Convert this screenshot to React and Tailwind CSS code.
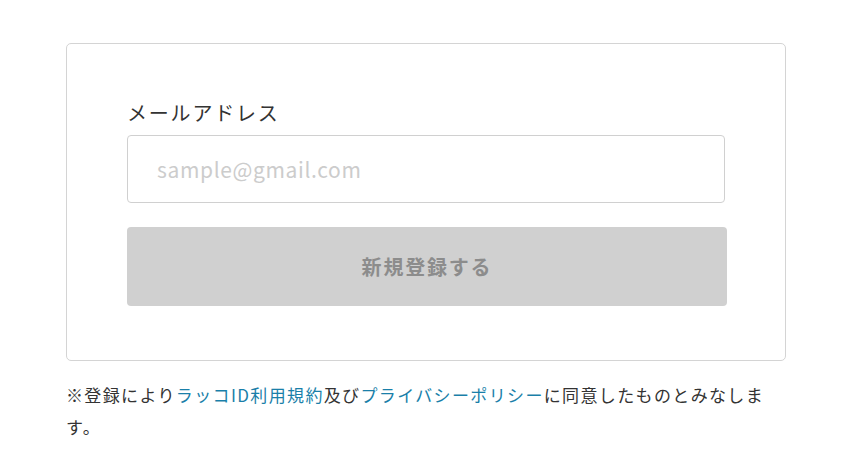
import React from 'react';

const font = { fontFamily: '"Noto Sans CJK JP", "Noto Sans", sans-serif' };

export default function App() {
  return (
    <div className="w-[856px] h-[456px] bg-white text-[#333]" style={font}>
      <div className="ml-[66px] pt-[43px] w-[720px]">
        {/* Card */}
        <div className="border border-[#d4d4d4] rounded-[5px] px-[60px] pt-[54px] pb-[54px]">
          <label className="block text-[20px] leading-[30px] tracking-[0.09em] mb-[7px]">
            メールアドレス
          </label>
          <input
            type="email"
            placeholder="sample@gmail.com"
            className="block w-[598px] h-[68px] border border-[#d0d0d0] rounded-[4px] px-[29px] text-[21px] tracking-[0.03em] placeholder:text-[#cccccc] outline-none"
          />
          <button
            disabled
            className="mt-[24px] w-[600px] h-[79px] bg-[#d0d0d0] rounded-[4px] text-[20px] font-bold tracking-[0.09em] text-[#8c8c8c]"
          >
            新規登録する
          </button>
        </div>

        {/* Notice */}
        <p className="mt-[18px] text-[17px] leading-[32px] tracking-[0.08em]">
          ※登録により
          <a className="text-[#1a7fa9]">ラッコID利用規約</a>
          及び
          <a className="text-[#1a7fa9]">プライバシーポリシー</a>
          に同意したものとみなします。
        </p>
      </div>
    </div>
  );
}
